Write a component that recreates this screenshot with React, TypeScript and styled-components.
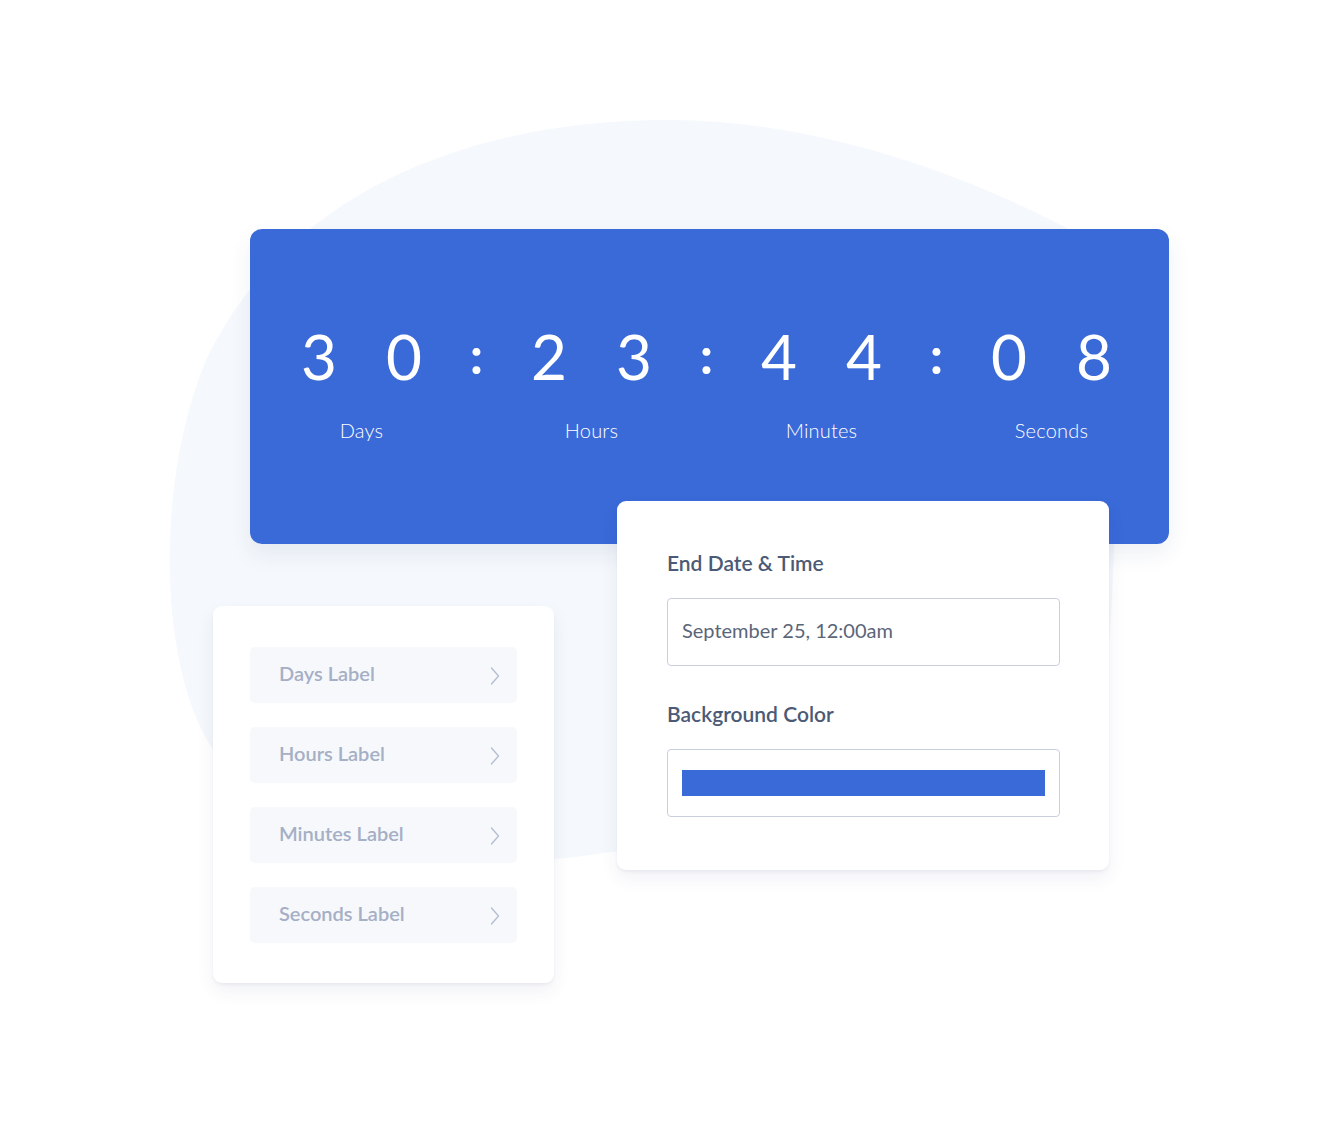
import React from "react";
import styled, { createGlobalStyle } from "styled-components";

const GlobalStyle = createGlobalStyle`
  html, body {
    margin: 0;
    padding: 0;
    background: #ffffff;
  }
  body {
    font-family: Lato, "Liberation Sans", sans-serif;
    -webkit-font-smoothing: antialiased;
  }
`;

const BLUE = "#3a69d8";

const Stage = styled.div`
  position: relative;
  width: 1340px;
  height: 1132px;
  box-sizing: border-box;
  padding: 229px 0 0 213px;
  overflow: hidden;
`;

const Blob = styled.svg`
  position: absolute;
  left: 0;
  top: 0;
  width: 1340px;
  height: 1132px;
  z-index: 0;
`;

const Content = styled.div`
  position: relative;
  z-index: 1;
  display: flex;
  flex-direction: column;
`;

const Banner = styled.section`
  margin-left: 37px;
  width: 919px;
  height: 315px;
  box-sizing: border-box;
  padding: 92px 6px 0 0;
  background: ${BLUE};
  border-radius: 12px;
  box-shadow: 0 10px 22px rgba(40, 60, 110, 0.08);
  display: flex;
  justify-content: center;
  align-items: flex-start;
  color: #ffffff;
`;

const Unit = styled.div`
  width: 170px;
  display: flex;
  flex-direction: column;
  align-items: center;
`;

const Digits = styled.div`
  display: flex;
  gap: 45px;
`;

const Digit = styled.span`
  width: 40px;
  text-align: center;
  font-size: 62px;
  line-height: 70px;
  font-weight: 400;
`;

const Colon = styled.span`
  width: 60px;
  text-align: center;
  font-size: 52px;
  line-height: 66px;
  font-weight: 700;
`;

const UnitLabel = styled.span`
  margin-top: 27px;
  font-size: 20px;
  line-height: 24px;
  font-weight: 300;
  letter-spacing: 0.2px;
`;

const BottomRow = styled.div`
  display: flex;
  align-items: flex-start;
  gap: 63px;
  margin-top: -43px;
`;

const Card = styled.div<{ $top?: number }>`
  box-sizing: border-box;
  background: #ffffff;
  border-radius: 9px;
  box-shadow: 0 2px 3px rgba(40, 60, 110, 0.05), 0 8px 18px rgba(40, 60, 110, 0.07);
  margin-top: ${(p) => p.$top ?? 0}px;
`;

const LabelCard = styled(Card)`
  width: 341px;
  height: 377px;
  padding: 41px 37px 0;
  display: flex;
  flex-direction: column;
  gap: 24px;
`;

const LabelItem = styled.div`
  height: 56px;
  box-sizing: border-box;
  padding: 0 17px 4px 29px;
  display: flex;
  align-items: center;
  justify-content: space-between;
  background: #f6f8fb;
  border-radius: 5px;
  color: #a5afc5;
  font-size: 20px;
  font-weight: 600;
`;

const Chevron = styled.svg`
  width: 10px;
  height: 18px;
  margin-top: 6px;
`;

const SettingsCard = styled(Card)`
  width: 492px;
  height: 369px;
  padding: 48px 50px 0;
  display: flex;
  flex-direction: column;
`;

const FieldLabel = styled.div`
  font-size: 21px;
  line-height: 28px;
  font-weight: 600;
  color: #4c5a75;
  margin-bottom: 21px;
`;

const Field = styled.div<{ $gapAfter?: number }>`
  width: 393px;
  height: 68px;
  box-sizing: border-box;
  border: 1px solid #c8d0de;
  border-radius: 4px;
  padding: 0 14px 5px;
  display: flex;
  align-items: center;
  margin-bottom: ${(p) => p.$gapAfter ?? 0}px;
  color: #5b6579;
  font-size: 20px;
`;

const Swatch = styled.div`
  flex: 1;
  height: 26px;
  margin-top: 4px;
  background: ${BLUE};
`;

const units = [
  { digits: ["3", "0"], label: "Days" },
  { digits: ["2", "3"], label: "Hours" },
  { digits: ["4", "4"], label: "Minutes" },
  { digits: ["0", "8"], label: "Seconds" },
];

const labelItems = ["Days Label", "Hours Label", "Minutes Label", "Seconds Label"];

export default function App() {
  return (
    <>
      <GlobalStyle />
      <Stage>
        <Blob viewBox="0 0 1340 1132" aria-hidden="true">
          <path
            fill="#f5f8fc"
            d="M 660 120 C 800 118, 950 165, 1080 235 C 1130 300, 1120 650, 1090 800 C 1000 840, 760 830, 590 855 C 420 880, 270 840, 210 745 C 158 660, 156 480, 206 360 C 288 190, 470 122, 660 120 Z"
          />
        </Blob>
        <Content>
          <Banner>
            {units.map((u, i) => (
              <React.Fragment key={u.label}>
                {i > 0 && <Colon>:</Colon>}
                <Unit>
                  <Digits>
                    {u.digits.map((d, j) => (
                      <Digit key={j}>{d}</Digit>
                    ))}
                  </Digits>
                  <UnitLabel>{u.label}</UnitLabel>
                </Unit>
              </React.Fragment>
            ))}
          </Banner>
          <BottomRow>
            <LabelCard $top={105}>
              {labelItems.map((t) => (
                <LabelItem key={t}>
                  <span>{t}</span>
                  <Chevron viewBox="0 0 10 18">
                    <polyline
                      points="1.5,1 8.5,9 1.5,17"
                      fill="none"
                      stroke="#b4bdd0"
                      strokeWidth="1.3"
                      strokeLinecap="round"
                      strokeLinejoin="round"
                    />
                  </Chevron>
                </LabelItem>
              ))}
            </LabelCard>
            <SettingsCard>
              <FieldLabel>End Date &amp; Time</FieldLabel>
              <Field $gapAfter={34}>September 25, 12:00am</Field>
              <FieldLabel>Background Color</FieldLabel>
              <Field>
                <Swatch />
              </Field>
            </SettingsCard>
          </BottomRow>
        </Content>
      </Stage>
    </>
  );
}
